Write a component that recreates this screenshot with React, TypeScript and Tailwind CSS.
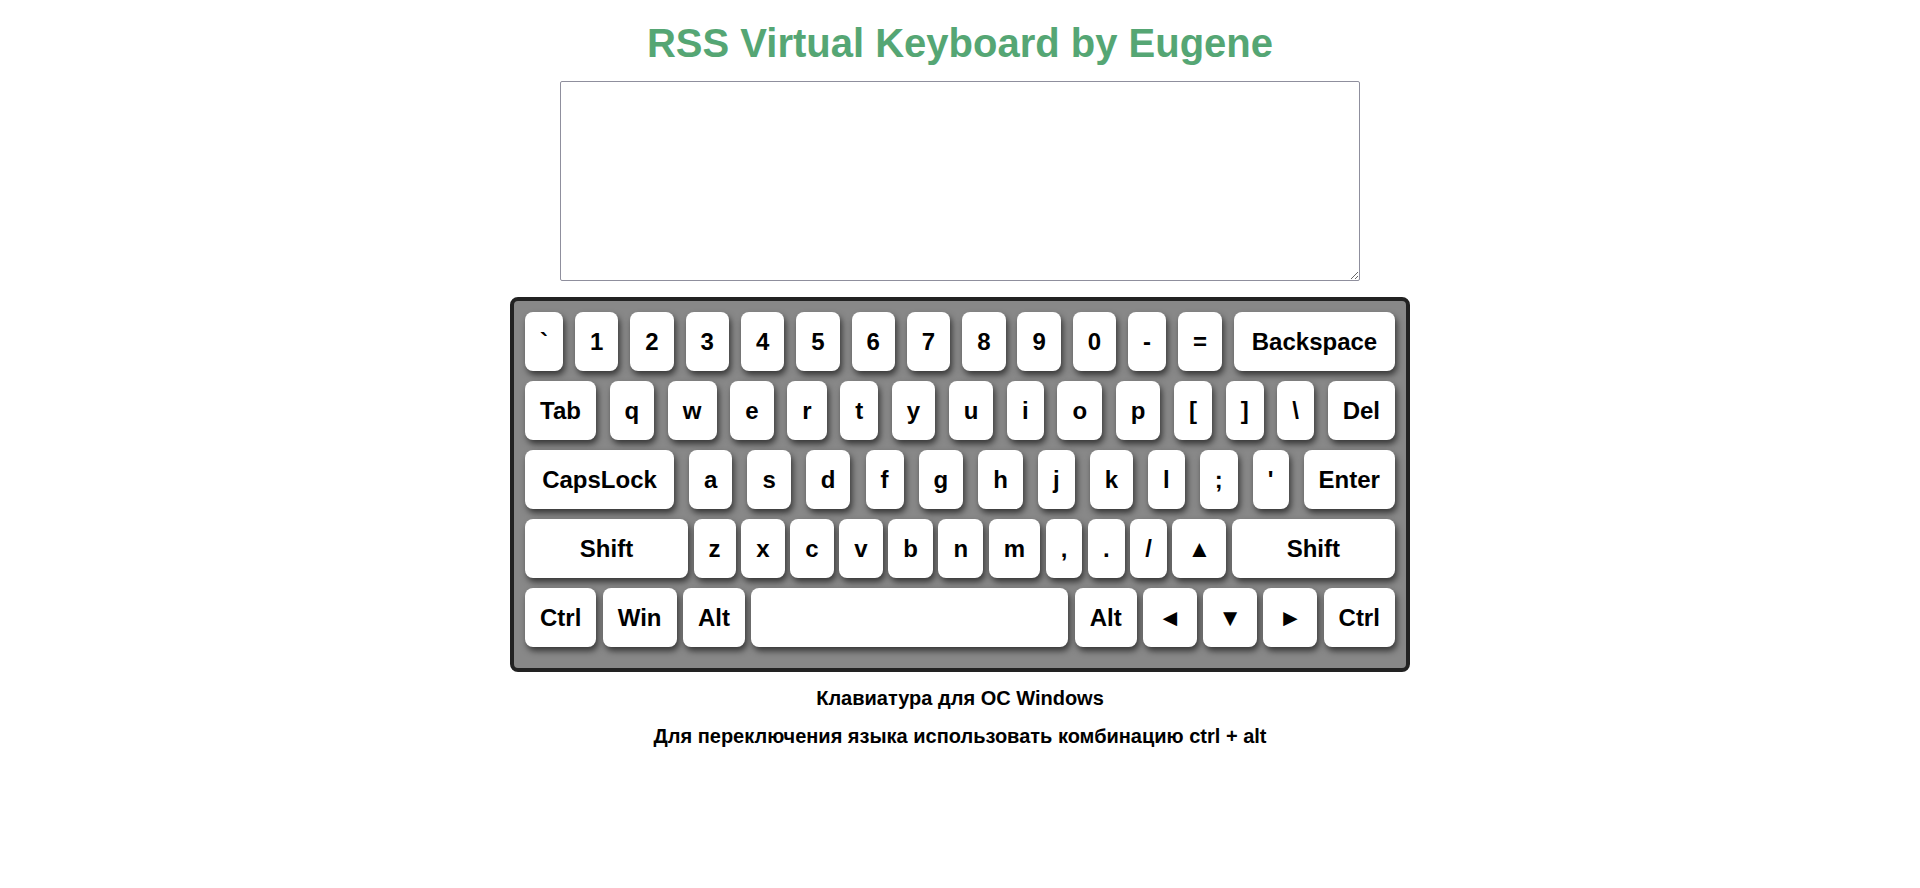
import React from 'react'

type Key = { label: string; cls?: string }

const rows: Key[][] = [
  [
    { label: '`' }, { label: '1' }, { label: '2' }, { label: '3' }, { label: '4' },
    { label: '5' }, { label: '6' }, { label: '7' }, { label: '8' }, { label: '9' },
    { label: '0' }, { label: '-' }, { label: '=' },
    { label: 'Backspace', cls: 'w-[161px]' },
  ],
  [
    { label: 'Tab' }, { label: 'q' }, { label: 'w' }, { label: 'e' }, { label: 'r' },
    { label: 't' }, { label: 'y' }, { label: 'u' }, { label: 'i' }, { label: 'o' },
    { label: 'p' }, { label: '[' }, { label: ']' }, { label: '\\' }, { label: 'Del' },
  ],
  [
    { label: 'CapsLock', cls: 'w-[149px]' }, { label: 'a' }, { label: 's' }, { label: 'd' },
    { label: 'f' }, { label: 'g' }, { label: 'h' }, { label: 'j' }, { label: 'k' },
    { label: 'l' }, { label: ';' }, { label: "'" }, { label: 'Enter' },
  ],
  [
    { label: 'Shift', cls: 'w-[163px]' }, { label: 'z' }, { label: 'x' }, { label: 'c' },
    { label: 'v' }, { label: 'b' }, { label: 'n' }, { label: 'm' }, { label: ',' },
    { label: '.' }, { label: '/' }, { label: '▲' }, { label: 'Shift', cls: 'w-[163px]' },
  ],
  [
    { label: 'Ctrl' }, { label: 'Win' }, { label: 'Alt' }, { label: '', cls: 'w-[317px]' },
    { label: 'Alt' }, { label: '◄' }, { label: '▼' }, { label: '►' }, { label: 'Ctrl' },
  ],
]

function KeyCap({ k }: { k: Key }) {
  return (
    <div
      className={`flex h-[59px] items-center justify-center rounded-lg bg-white px-[15px] text-[24px] font-bold text-black shadow-[2px_4px_6px_rgba(0,0,0,0.6)] ${k.cls ?? ''}`}
    >
      {k.label}
    </div>
  )
}

export default function App() {
  return (
    <div className="min-h-[888px] bg-white pt-[20px] font-['Liberation_Sans',Arial,sans-serif]">
      {/* Title */}
      <h1 className="mb-[15px] text-center text-[40px] font-bold leading-[46px] text-[#55a674]">
        RSS Virtual Keyboard by Eugene
      </h1>

      {/* Output */}
      <textarea className="mx-auto block h-[200px] w-[800px] rounded-[2px] border border-[#8f8f9d] bg-white p-[2px] text-[13px] outline-none" />

      {/* Keyboard */}
      <div className="mx-auto mt-[16px] flex w-[900px] flex-col gap-[10px] rounded-lg border-[4px] border-[#222] bg-[#888] px-[11px] pt-[11px] pb-[21px]">
        {rows.map((row, i) => (
          <div key={i} className="flex justify-between">
            {row.map((k, j) => (
              <KeyCap key={j} k={k} />
            ))}
          </div>
        ))}
      </div>

      {/* Hints */}
      <p className="mt-[15px] text-center text-[20px] leading-[23px] font-bold text-black">Клавиатура для ОС Windows</p>
      <p className="mt-[15px] text-center text-[20px] leading-[23px] font-bold text-black">
        Для переключения языка использовать комбинацию ctrl + alt
      </p>
    </div>
  )
}
